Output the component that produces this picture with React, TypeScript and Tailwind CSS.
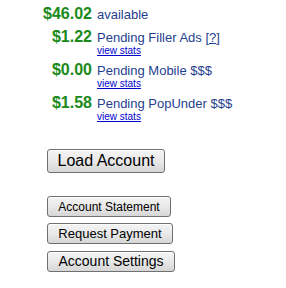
import type { ReactNode } from "react";

const rows = [
  { amount: "$1.22", label: "Pending Filler Ads", help: true },
  { amount: "$0.00", label: "Pending Mobile $$$", help: false },
  { amount: "$1.58", label: "Pending PopUnder $$$", help: false },
];

function Btn({ className, children }: { className: string; children: ReactNode }) {
  return (
    <button
      className={`flex items-center justify-center rounded-[3px] border border-[#707070] bg-linear-to-b from-[#f4f4f4] via-[#e9e9e9] to-[#d6d6d6] text-black shadow-[inset_0_1px_0_#ffffff] ${className}`}>
      {children}
    </button>
  );
}

export default function App() {
  return (
    <div className="h-[288px] w-[286px] bg-white font-['Liberation_Sans',Arial,sans-serif]">
      <div className="pl-[43px] pt-[5px]">
        <div className="flex items-baseline">
          <span className="w-[49px] text-right text-[16px] leading-[18px] font-bold text-[#1b8a1b]">
            $46.02
          </span>
          <span className="ml-[5px] text-[13px] leading-[15px] text-[#1f3f8f]">available</span>
        </div>

        <div className="mt-[5px] flex flex-col gap-[5px]">
          {rows.map((r) => (
            <div key={r.amount} className="flex items-baseline">
              <span className="w-[49px] text-right text-[16px] leading-[18px] font-bold text-[#1b8a1b]">
                {r.amount}
              </span>
              <div className="ml-[5px] flex flex-col">
                <span className="text-[13px] leading-[14px] text-[#1f3f8f]">
                  {r.label}
                  {r.help && (
                    <>
                      {" "}[<span className="underline">?</span>]
                    </>
                  )}
                </span>
                <a className="text-[10px] leading-[11px] text-[#0000cc] underline">view stats</a>
              </div>
            </div>
          ))}
        </div>
      </div>

      <div className="mt-[27px] flex flex-col items-start pl-[47px]">
        <Btn className="h-[24px] w-[118px] text-[16px]">Load Account</Btn>
        <Btn className="mt-[23px] h-[21px] w-[124px] text-[12px]">Account Statement</Btn>
        <Btn className="mt-[6px] h-[21px] w-[126px] text-[13px]">Request Payment</Btn>
        <Btn className="mt-[7px] h-[21px] w-[128px] text-[14px]">Account Settings</Btn>
      </div>
    </div>
  );
}
